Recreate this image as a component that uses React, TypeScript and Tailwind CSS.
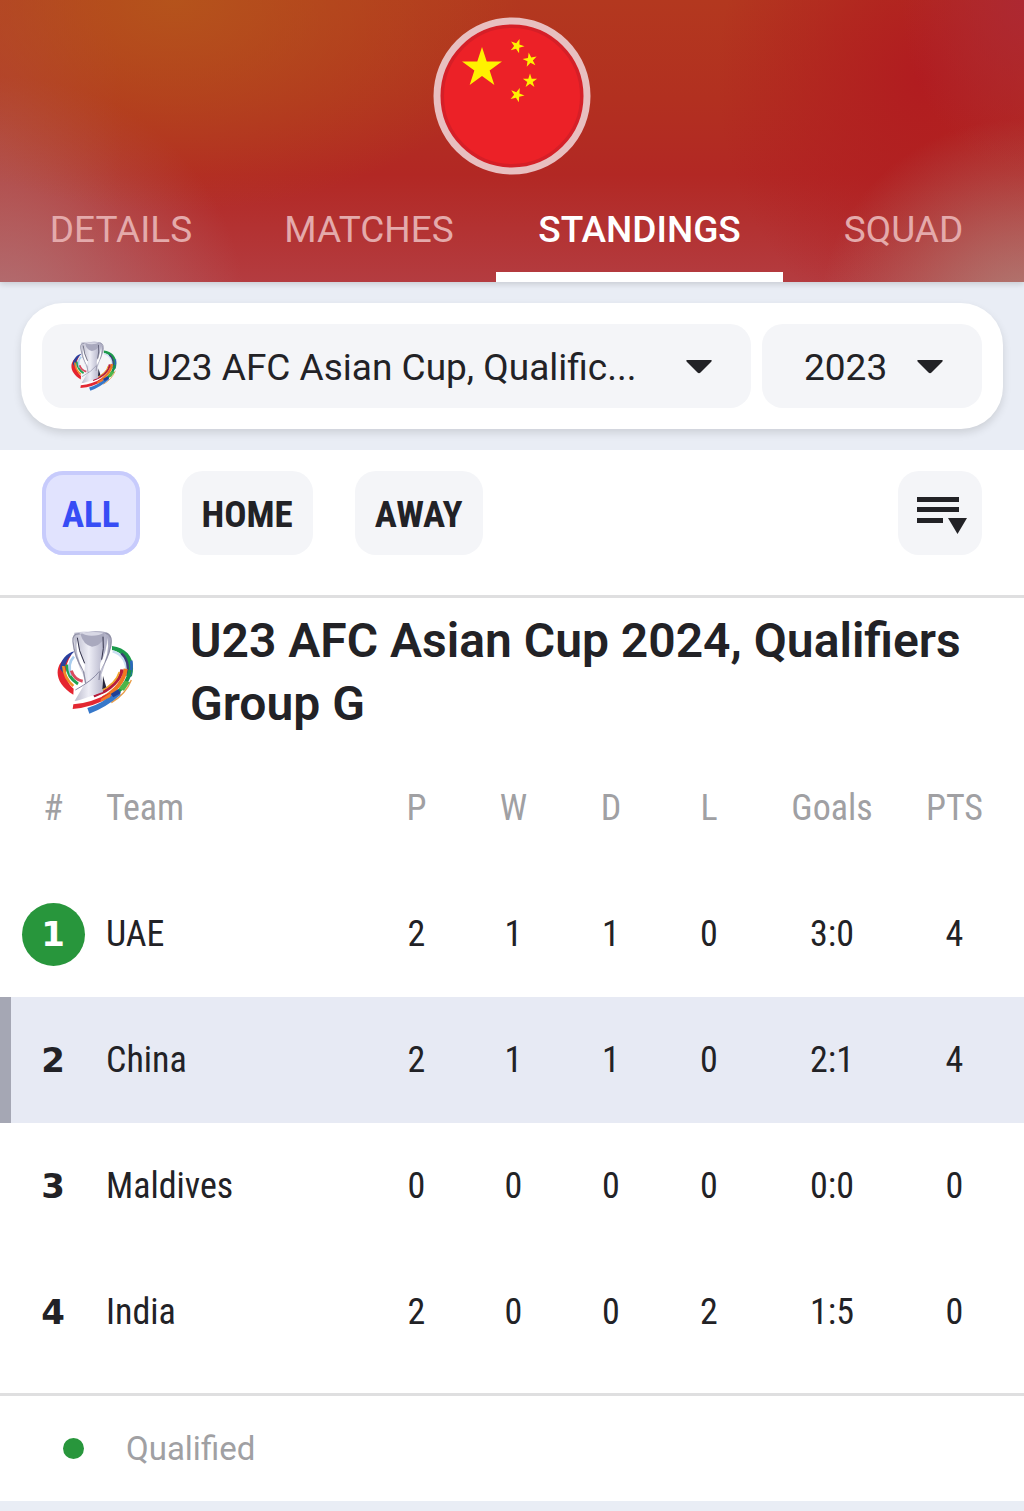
import { useState } from 'react'

type Row = {
  position: number
  team: string
  stats: string[]
  qualified?: boolean
  current?: boolean
}

const TABS = ['DETAILS', 'MATCHES', 'STANDINGS', 'SQUAD']
const FILTERS = ['ALL', 'HOME', 'AWAY']

const ROWS: Row[] = [
  { position: 1, team: 'UAE', stats: ['2', '1', '1', '0', '3:0', '4'], qualified: true },
  { position: 2, team: 'China', stats: ['2', '1', '1', '0', '2:1', '4'], current: true },
  { position: 3, team: 'Maldives', stats: ['0', '0', '0', '0', '0:0', '0'] },
  { position: 4, team: 'India', stats: ['2', '0', '0', '2', '1:5', '0'] }
]

// five-pointed star with its centre at 0,0 and an outer radius of 10
const STAR =
  '0,-10 2.25,-3.09 9.51,-3.09 3.63,1.18 5.88,8.09 0,3.82 -5.88,8.09 -3.63,1.18 -9.51,-3.09 -2.25,-3.09'

function ChinaFlag() {
  return (
    <svg viewBox="0 0 158 158" className="size-[158px]" role="img" aria-label="China">
      <circle cx="79" cy="79" r="75" fill="#ec2127" />
      <circle cx="79" cy="79" r="70" fill="none" stroke="#d51f27" strokeWidth="4" />
      <circle cx="79" cy="79" r="75" fill="none" stroke="#e8bfc0" strokeWidth="7" />
      <g fill="#fff200">
        <polygon points={STAR} transform="translate(49 51) scale(2.1)" />
        <polygon points={STAR} transform="translate(84 29) rotate(20) scale(.75)" />
        <polygon points={STAR} transform="translate(97 43) rotate(-10) scale(.75)" />
        <polygon points={STAR} transform="translate(97 64) scale(.75)" />
        <polygon points={STAR} transform="translate(84 78) rotate(22) scale(.75)" />
      </g>
    </svg>
  )
}

function CupLogo({ className }: { className: string }) {
  return (
    <svg viewBox="18 20 237 252" className={className} fill="none" aria-hidden>
      <defs>
        <linearGradient id="cup" x1="0" x2="1">
          <stop offset="0" stopColor="#b9b9cb" />
          <stop offset=".4" stopColor="#eeeef6" />
          <stop offset=".7" stopColor="#c4c4d6" />
          <stop offset="1" stopColor="#a4a4bc" />
        </linearGradient>
      </defs>
      {/* left ribbons */}
      <path d="M64 94C10 116 6 176 70 214L71 196C42 172 40 130 64 94Z" fill="#e5242f" />
      <path d="M74 84C50 88 30 112 30 136L42 152C42 126 52 104 74 84Z" fill="#2a3f9d" />
      <path d="M40 128Q42 164 70 188" stroke="#f28c28" strokeWidth="8" />
      <path d="M50 124Q52 162 84 182" stroke="#1fa350" strokeWidth="9" />
      <path d="M72 100Q50 122 64 156" stroke="#a9cdee" strokeWidth="8" />
      <path d="M64 142Q72 168 98 174" stroke="#d94a5e" strokeWidth="9" />
      {/* right ribbons */}
      <path d="M186 68C236 74 258 112 246 158L232 168C242 116 222 88 186 80Z" fill="#1b9a4b" />
      <path d="M188 84Q230 96 230 150" stroke="#c9def2" strokeWidth="7" />
      <path d="M214 90Q240 112 232 158" stroke="#3b3f73" strokeWidth="7" />
      <path d="M244 112Q250 150 222 186" stroke="#2b66bd" strokeWidth="8" />
      <path d="M240 140Q234 178 204 206" stroke="#169447" strokeWidth="11" />
      <path d="M227 136Q220 190 158 224" stroke="#f07820" strokeWidth="12" />
      <path d="M216 138Q210 186 132 220" stroke="#b51c3c" strokeWidth="10" />
      <path d="M208 146Q198 182 150 204" stroke="#f0a52c" strokeWidth="5" />
      <path d="M244 170Q228 212 184 238" stroke="#e89b45" strokeWidth="4" />
      {/* trophy body */}
      <path d="M73 28Q124 19 165 26Q188 34 181 75L154 154L159 206L72 236L106 178L100 156Q68 96 73 28Z" fill="url(#cup)" />
      <path d="M91 32Q124 19 165 26L161 48Q146 70 126 70Q101 66 91 32Z" fill="#a9a9be" />
      <path d="M96 30Q124 23 161 28Q149 37 125 37Q105 37 96 30Z" fill="#d8d8e5" />
      <path
        d="M89 32Q66 30 69 55Q73 101 100 141L107 180M166 29Q189 34 182 69Q174 107 151 137L147 170"
        stroke="#9090a6"
        strokeWidth="4"
      />
      <path d="M82 43Q83 83 105 126L103 147Q72 90 82 43Z" fill="#fff" />
      <path d="M172 43Q171 84 151 119L149 146Q182 91 172 43Z" fill="#fff" />
      <path d="M159 40Q163 76 155 109M82 43Q85 83 104 120" stroke="#34344c" strokeWidth="3" />
      <path d="M159 158L169 192L157 198Z" fill="#25253d" />
      <path d="M76 200Q127 172 148 144" stroke="#8a8aa4" strokeWidth="3" />
      {/* front ribbons */}
      <path d="M72 233Q120 231 155 213L178 205Q128 239 70 243Z" fill="#fff" />
      <path d="M70 243Q126 238 180 208L186 219Q130 252 68 257Z" fill="#e32832" />
      <path d="M112 254Q156 242 204 201L212 214Q168 252 118 271Z" fill="#3678ca" />
      <path d="M154 226L188 205L180 222L150 236Z" fill="#ef7d2c" />
      <path d="M182 212L204 198L213 209L190 222Z" fill="#203f94" />
      <path d="M206 196L224 172L240 176L222 202Z" fill="#4fb548" />
    </svg>
  )
}

function Caret() {
  return (
    <svg
      viewBox="0 0 26 14"
      className="pointer-events-none absolute top-[36px] right-[39px] h-[14px] w-[26px]"
      aria-hidden
    >
      <path d="M1 0H25Q26.500 .5 25 2L14.500 12.500Q13 14 11.500 12.500L1 2Q-.5 .5 1 0Z" fill="#222226" />
    </svg>
  )
}

export default function App() {
  const [tab, setTab] = useState('STANDINGS')
  const [filter, setFilter] = useState('ALL')

  return (
    <div className="w-full bg-[#e9edf5] font-['Roboto','Liberation_Sans',sans-serif] text-[#222226]">
      <header className="relative bg-[#b22a22] bg-[radial-gradient(ellipse_34%_75%_at_17%_0%,#b5561be6,transparent),radial-gradient(ellipse_24%_85%_at_0%_112%,#b2767ae6,transparent),radial-gradient(ellipse_20%_70%_at_100%_112%,#b08078f0,transparent),radial-gradient(ellipse_12%_60%_at_100%_0%,#ad2832,transparent),radial-gradient(ellipse_20%_90%_at_90%_28%,#b11c20,transparent),radial-gradient(ellipse_12%_100%_at_0%_50%,#b2423ccc,transparent),linear-gradient(#b3381f_0%,#b23020_35%,#b22824_62%,#b43c40_100%)] pt-[17px] shadow-[0_2px_6px_#00000026]">
        <div className="flex justify-center">
          <ChinaFlag />
        </div>
        <nav className="mt-1 grid grid-cols-[242fr_254fr_287fr_241fr]">
          {TABS.map((t) => (
            <button
              key={t}
              type="button"
              aria-current={tab === t ? 'page' : undefined}
              onClick={() => setTab(t)}
              className={`h-[103px] border-b-[10px] pt-[8px] text-[37px] leading-none ${
                tab === t ? 'border-white font-medium text-white' : 'border-transparent text-[#e4aaab]'
              }`}
            >
              {t}
            </button>
          ))}
        </nav>
      </header>

      <div className="p-[21px]">
        <div className="flex gap-[11px] rounded-[42px] bg-white p-[21px] shadow-[0_4px_8px_#0000001f]">
          <div className="relative min-w-0 flex-1">
            <CupLogo className="pointer-events-none absolute top-[17px] left-[28px] h-[50px] w-[48px]" />
            <select
              aria-label="Competition"
              className="h-[84px] w-full appearance-none rounded-[21px] bg-[#f4f5f8] pt-[3px] pr-[90px] pl-[105px] text-[37px]"
            >
              <option>U23 AFC Asian Cup, Qualific...</option>
            </select>
            <Caret />
          </div>
          <div className="relative w-[220px]">
            <select
              aria-label="Season"
              className="h-[84px] w-full appearance-none rounded-[21px] bg-[#f4f5f8] pt-[3px] pr-[80px] pl-[42px] text-[37px]"
            >
              <option>2023</option>
            </select>
            <Caret />
          </div>
        </div>
      </div>

      <main className="bg-white">
        <div className="flex items-center gap-[42px] border-b-[3px] border-[#dfdfe0] px-[42px] pt-[21px] pb-[40px]">
          {FILTERS.map((f) => (
            <button
              key={f}
              type="button"
              aria-pressed={filter === f}
              onClick={() => setFilter(f)}
              className={`h-[84px] rounded-[21px] px-[20px] pt-[2px] font-['Roboto_Condensed','Roboto',sans-serif] text-[37px] leading-none font-bold ${
                filter === f
                  ? 'bg-[#e1e3fe] text-[#374df5] inset-ring-4 inset-ring-[#c7cbfc]'
                  : 'bg-[#f4f5f8] text-[#222226]'
              }`}
            >
              {f}
            </button>
          ))}
          <button
            type="button"
            aria-label="Sort"
            className="ml-auto flex size-[84px] items-center justify-center rounded-[21px] bg-[#f4f5f8] pt-1 pl-1"
          >
            <svg viewBox="0 0 50 38" className="h-[38px] w-[50px]" fill="#222226" aria-hidden>
              <path d="M0 1H42V6H0ZM0 11H42V16H0ZM0 22H26V27H0ZM31 22H50L40.500 38Z" />
            </svg>
          </button>
        </div>

        <div className="flex items-center pt-[11px] pr-[21px] pb-[10px] pl-[56px]">
          <CupLogo className="h-[84px] w-[79px] shrink-0" />
          <h2 className="ml-[55px] text-[48px] leading-[63px] font-semibold">
            U23 AFC Asian Cup 2024, Qualifiers
            <br />
            Group G
          </h2>
        </div>

        <table className="w-full table-fixed border-collapse text-center font-['Roboto_Condensed','Roboto',sans-serif] text-[36px] leading-none">
          <colgroup>
            <col className="w-[106px]" />
            <col />
            <col className="w-[97px]" />
            <col className="w-[97px]" />
            <col className="w-[98px]" />
            <col className="w-[98px]" />
            <col className="w-[148px]" />
            <col className="w-[118px]" />
          </colgroup>
          <thead className="text-[#a0a0a3]">
            <tr className="h-[126px]">
              <th className="font-normal">#</th>
              <th className="text-left font-normal">Team</th>
              {['P', 'W', 'D', 'L', 'Goals', 'PTS'].map((h) => (
                <th key={h} className="font-normal last:pr-[21px]">
                  {h}
                </th>
              ))}
            </tr>
          </thead>
          <tbody>
            {ROWS.map((r) => (
              <tr key={r.team} className={`h-[126px] ${r.current ? 'bg-[#e7eaf4]' : ''}`}>
                <td
                  className={`font-['DejaVu_Sans',sans-serif] text-[34px] font-bold ${
                    r.current ? 'shadow-[inset_11px_0_0_#a5a7b4]' : ''
                  }`}
                >
                  {r.qualified ? (
                    <span className="mx-auto flex size-[63px] items-center justify-center rounded-full bg-[#28963c] text-white">
                      {r.position}
                    </span>
                  ) : (
                    r.position
                  )}
                </td>
                <td className="text-left">{r.team}</td>
                {r.stats.map((s, i) => (
                  <td key={i} className="last:pr-[21px]">
                    {s}
                  </td>
                ))}
              </tr>
            ))}
          </tbody>
        </table>

        <div className="mt-[18px] flex h-[108px] items-center gap-[42px] border-t-[3px] border-[#dfdfe0] pl-[63px]">
          <span className="size-[21px] rounded-full bg-[#28963c]" />
          <span className="text-[33px] leading-none text-[#a0a0a3]">Qualified</span>
        </div>
      </main>
      <footer className="h-[10px]" />
    </div>
  )
}
